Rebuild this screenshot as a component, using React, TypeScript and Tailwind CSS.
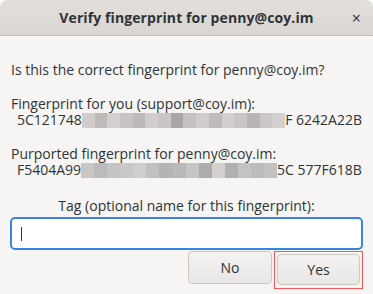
import React from "react";

const blur1 = ["#cfcccb", "#bdbab9", "#d2cfce", "#c7c4c3", "#bcb9b8", "#d0cdcc", "#c9c6c5", "#a9a6a5", "#c4c1c0", "#cfcccb", "#bebbba", "#d1cecd", "#c8c5c4", "#b7b4b3", "#cac7c6", "#d3d0cf"];
const blur2 = ["#c9c6c5", "#bdbabb", "#c4c3c5", "#c9c8c8", "#d0cecd", "#c3c1c0", "#b5b3b3", "#b9b9bb", "#c8c6c5", "#aeacab", "#d3d1d0", "#b3b1b0", "#c5c3c2", "#bcbcbe", "#c4c2c1"];

function Blur({ colors, width }: { colors: string[]; width: number }) {
  return (
    <span className="inline-flex h-[15px]" style={{ width }}>
      {colors.map((c, i) => (
        <span key={i} className="flex-1 h-full" style={{ background: c }} />
      ))}
    </span>
  );
}

export default function App() {
  return (
    <div
      className="w-[373px] h-[294px] bg-white text-[#2e3436]"
      style={{ fontFamily: '"Open Sans", "Noto Sans", sans-serif' }}
    >
      <div className="w-full h-full flex flex-col rounded-t-[7px] overflow-hidden bg-[#f6f5f4]">
        {/* title bar */}
        <div className="h-[36px] shrink-0 flex items-center justify-center relative bg-gradient-to-b from-[#e2dfdc] to-[#dad6d2] border-b border-[#c0bab4]">
          <span className="text-[14px] font-bold tracking-[0.1px] text-[#2e3436]">
            Verify fingerprint for penny@coy.im
          </span>
          <span className="absolute right-[12px] top-[10px] text-[16px] leading-none text-[#2e3436]">
            ×
          </span>
        </div>

        {/* body */}
        <div className="flex flex-col px-[11px] text-[14px] leading-[16px]">
          <div className="mt-[26px]">Is this the correct fingerprint for penny@coy.im?</div>

          <div className="mt-[18px]">Fingerprint for you (support@coy.im):</div>
          <div className="pl-[6px] flex items-center h-[16px] whitespace-nowrap">
            <span>5C121748</span>
            <Blur colors={blur1} width={205} />
            <span>F 6242A22B</span>
          </div>

          <div className="mt-[18px]">Purported fingerprint for penny@coy.im:</div>
          <div className="pl-[6px] flex items-center h-[16px] whitespace-nowrap">
            <span>F5404A99</span>
            <Blur colors={blur2} width={196} />
            <span>5C 577F618B</span>
          </div>

          <div className="mt-[20px] text-center">Tag (optional name for this fingerprint):</div>
        </div>

        <div className="mx-[10px] mt-[3px] h-[33px] rounded-[5px] border-2 border-[#3584e4] bg-white flex items-center pl-[9px]">
          <span className="w-[1px] h-[14px] bg-[#2e3436]" />
        </div>

        <div className="flex justify-end gap-[5px] pr-[11px] mt-[1px]">
          <button className="w-[84px] h-[33px] rounded-[4px] border border-[#cdc7c2] bg-gradient-to-b from-[#f4f3f2] to-[#e9e7e5] text-[14px] text-[#2e3436]">
            No
          </button>
          <div className="border border-[#f05a5a] px-[2px] pt-[2px] pb-[3px] -ml-[3px] -mr-[1px]">
            <button className="w-[83px] h-[31px] rounded-[4px] border border-[#cdc7c2] bg-gradient-to-b from-[#f4f3f2] to-[#e9e7e5] text-[14px] text-[#2e3436]">
              Yes
            </button>
          </div>
        </div>
      </div>
    </div>
  );
}
